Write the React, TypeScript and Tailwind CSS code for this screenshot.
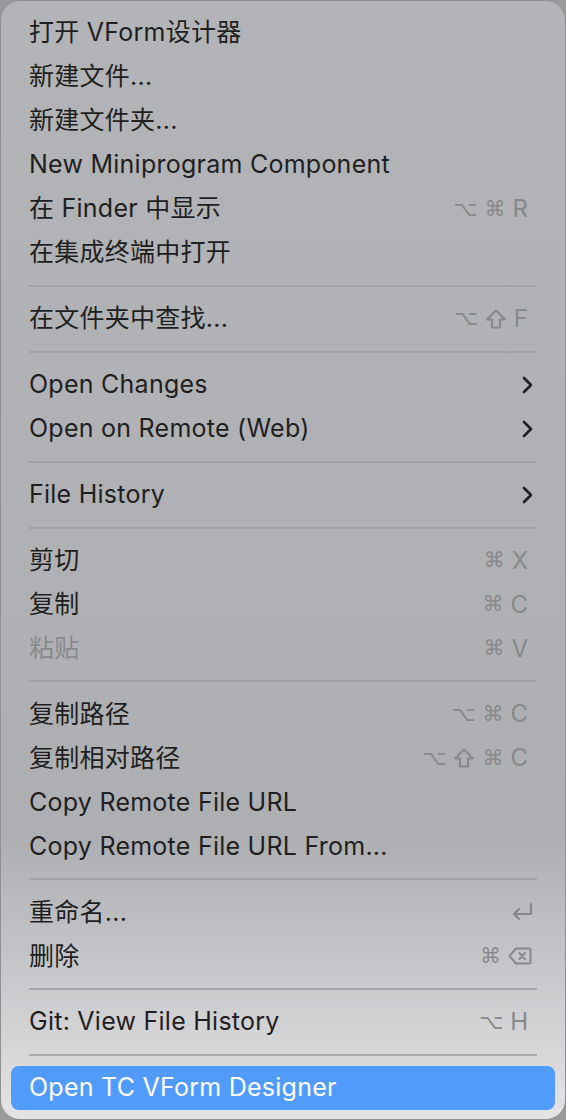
import React from "react";

type Item =
  | { sep: true }
  | { label: string; keys?: string[]; sub?: boolean; disabled?: boolean; active?: boolean };

const items: Item[] = [
  { label: "打开 VForm设计器" },
  { label: "新建文件..." },
  { label: "新建文件夹..." },
  { label: "New Miniprogram Component" },
  { label: "在 Finder 中显示", keys: ["⌥", "⌘", "R"] },
  { label: "在集成终端中打开" },
  { sep: true },
  { label: "在文件夹中查找...", keys: ["⌥", "⇧", "F"] },
  { sep: true },
  { label: "Open Changes", sub: true },
  { label: "Open on Remote (Web)", sub: true },
  { sep: true },
  { label: "File History", sub: true },
  { sep: true },
  { label: "剪切", keys: ["⌘", "X"] },
  { label: "复制", keys: ["⌘", "C"] },
  { label: "粘贴", keys: ["⌘", "V"], disabled: true },
  { sep: true },
  { label: "复制路径", keys: ["⌥", "⌘", "C"] },
  { label: "复制相对路径", keys: ["⌥", "⇧", "⌘", "C"] },
  { label: "Copy Remote File URL" },
  { label: "Copy Remote File URL From..." },
  { sep: true },
  { label: "重命名...", keys: ["↩"] },
  { label: "删除", keys: ["⌘", "⌫"] },
  { sep: true },
  { label: "Git: View File History", keys: ["⌥", "H"] },
  { sep: true },
  { label: "Open TC VForm Designer", active: true },
];

function Key({ k }: { k: string }) {
  if (k === "↩") {
    return (
      <svg width="24" height="22" viewBox="0 0 24 22" fill="none" stroke="currentColor" strokeWidth="2.2" strokeLinecap="round" strokeLinejoin="round" className="-mr-[6px]">
        <path d="M21 3v10H4" />
        <path d="M9 8l-5 5 5 5" />
      </svg>
    );
  }
  if (k === "⌫") {
    return (
      <svg width="24" height="20" viewBox="0 0 24 20" fill="none" stroke="currentColor" strokeWidth="2" strokeLinejoin="round" className="-mr-[4px]">
        <path d="M8 2.5h13a1.5 1.5 0 0 1 1.5 1.5v12A1.5 1.5 0 0 1 21 17.5H8L1.5 10z" />
        <path d="M11.5 7l5.5 6M17 7l-5.5 6" strokeLinecap="round" />
      </svg>
    );
  }
  if (k === "⇧") {
    return (
      <svg width="22" height="22" viewBox="0 0 22 22" fill="none" stroke="currentColor" strokeWidth="2" strokeLinejoin="round">
        <path d="M11 2.5L2 11.5h5v8h8v-8h5z" />
      </svg>
    );
  }
  const sym = k === "⌥" || k === "⌘";
  return (
    <span className={sym ? "font-['DejaVu_Sans'] text-[21px] leading-none" : "text-[24px] leading-none"}>{k}</span>
  );
}

export default function App() {
  return (
    <div className="w-[566px] h-[1120px] bg-[#9a9a9c] font-['Inter','Noto_Sans_CJK_SC',sans-serif]">
      <div className="h-full rounded-[20px] border border-[#8f9094] bg-gradient-to-b from-[#b2b4b8] via-[#aeafb3] via-75% to-[#e4e4e6] px-[10px] pt-[10px] pb-[9px] flex flex-col">
        {items.map((it, i) =>
          "sep" in it ? (
            <div key={i} className="h-[22px] flex items-center px-[18px]">
              <div className="h-[2px] w-full bg-[#9c9da1]/80" />
            </div>
          ) : (
            <div
              key={i}
              className={
                "h-[44px] shrink-0 flex items-center pl-[18px] pr-[18px] rounded-[8px] text-[25px] tracking-[0.01em] " +
                (it.active ? "bg-[#519bfd] text-white" : it.disabled ? "text-[#88898c]" : "text-[#1f1f21]")
              }
            >
              <span className="flex-1 whitespace-nowrap">{it.label}</span>
              {it.keys && (
                <span className="flex items-center gap-[7px] text-[#87888b] mr-[9px] tracking-normal">
                  {it.keys.map((k, j) => (
                    <Key key={j} k={k} />
                  ))}
                </span>
              )}
              {it.sub && (
                <svg width="14" height="20" viewBox="0 0 14 20" fill="none" stroke="#1f1f21" strokeWidth="2.6" strokeLinecap="round" strokeLinejoin="round" className="mr-[2px]">
                  <path d="M3 3l7 7-7 7" />
                </svg>
              )}
            </div>
          )
        )}
      </div>
    </div>
  );
}
